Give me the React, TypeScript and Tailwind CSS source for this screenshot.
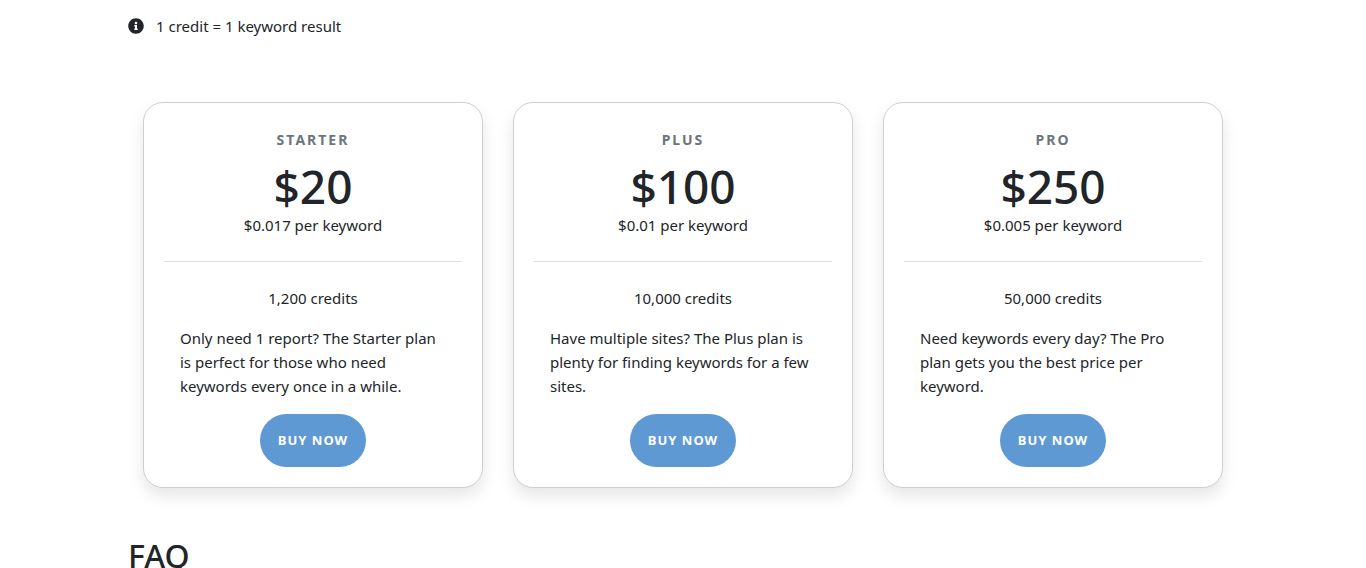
import { FaInfoCircle } from "react-icons/fa";

type Plan = {
  name: string;
  price: string;
  rate: string;
  credits: string;
  description: string;
};

const plans: Plan[] = [
  {
    name: "Starter",
    price: "$20",
    rate: "$0.017 per keyword",
    credits: "1,200 credits",
    description:
      "Only need 1 report? The Starter plan is perfect for those who need keywords every once in a while.",
  },
  {
    name: "Plus",
    price: "$100",
    rate: "$0.01 per keyword",
    credits: "10,000 credits",
    description:
      "Have multiple sites? The Plus plan is plenty for finding keywords for a few sites.",
  },
  {
    name: "Pro",
    price: "$250",
    rate: "$0.005 per keyword",
    credits: "50,000 credits",
    description:
      "Need keywords every day? The Pro plan gets you the best price per keyword.",
  },
];

function PlanCard({ plan }: { plan: Plan }) {
  return (
    <article className="flex flex-col rounded-[20px] border border-[#cfcfcf] bg-white px-5 pt-[26px] pb-5 shadow-[0_8px_16px_rgba(0,0,0,0.1)]">
      <h2 className="text-center text-[14px] leading-[22px] font-bold tracking-[2px] text-[#6c757d] uppercase">
        {plan.name}
      </h2>
      <p className="mt-2 text-center text-[46px] leading-[54px] font-medium">{plan.price}</p>
      <p className="text-center text-[15px] leading-6">{plan.rate}</p>
      <hr className="my-6 border-[#e0e0e0]" />
      <p className="text-center text-[15px] leading-6">{plan.credits}</p>
      <p className="mt-4 px-4 text-[15px] leading-6">{plan.description}</p>
      <button
        type="button"
        className="mt-4 self-center rounded-full bg-[#5e99d4] px-[18px] py-4 text-[13px] leading-[21px] font-bold tracking-[1px] text-white uppercase"
      >
        Buy now
      </button>
    </article>
  );
}

export default function App() {
  return (
    <main className="min-h-screen bg-white font-['Noto_Sans','Open_Sans',sans-serif] text-[#212529]">
      <div className="mx-auto max-w-[1140px] px-[15px]">
        <p className="flex items-center gap-3 pt-[14px] text-[15px] leading-6">
          <FaInfoCircle className="size-4" aria-hidden="true" />
          <span>1 credit = 1 keyword result</span>
        </p>
        <section aria-label="Plans" className="mt-16 grid grid-cols-3 gap-[30px] px-[15px]">
          {plans.map((plan) => (
            <PlanCard key={plan.name} plan={plan} />
          ))}
        </section>
        <h2 className="mt-12 text-[32px] leading-10 font-medium">FAQ</h2>
      </div>
    </main>
  );
}
